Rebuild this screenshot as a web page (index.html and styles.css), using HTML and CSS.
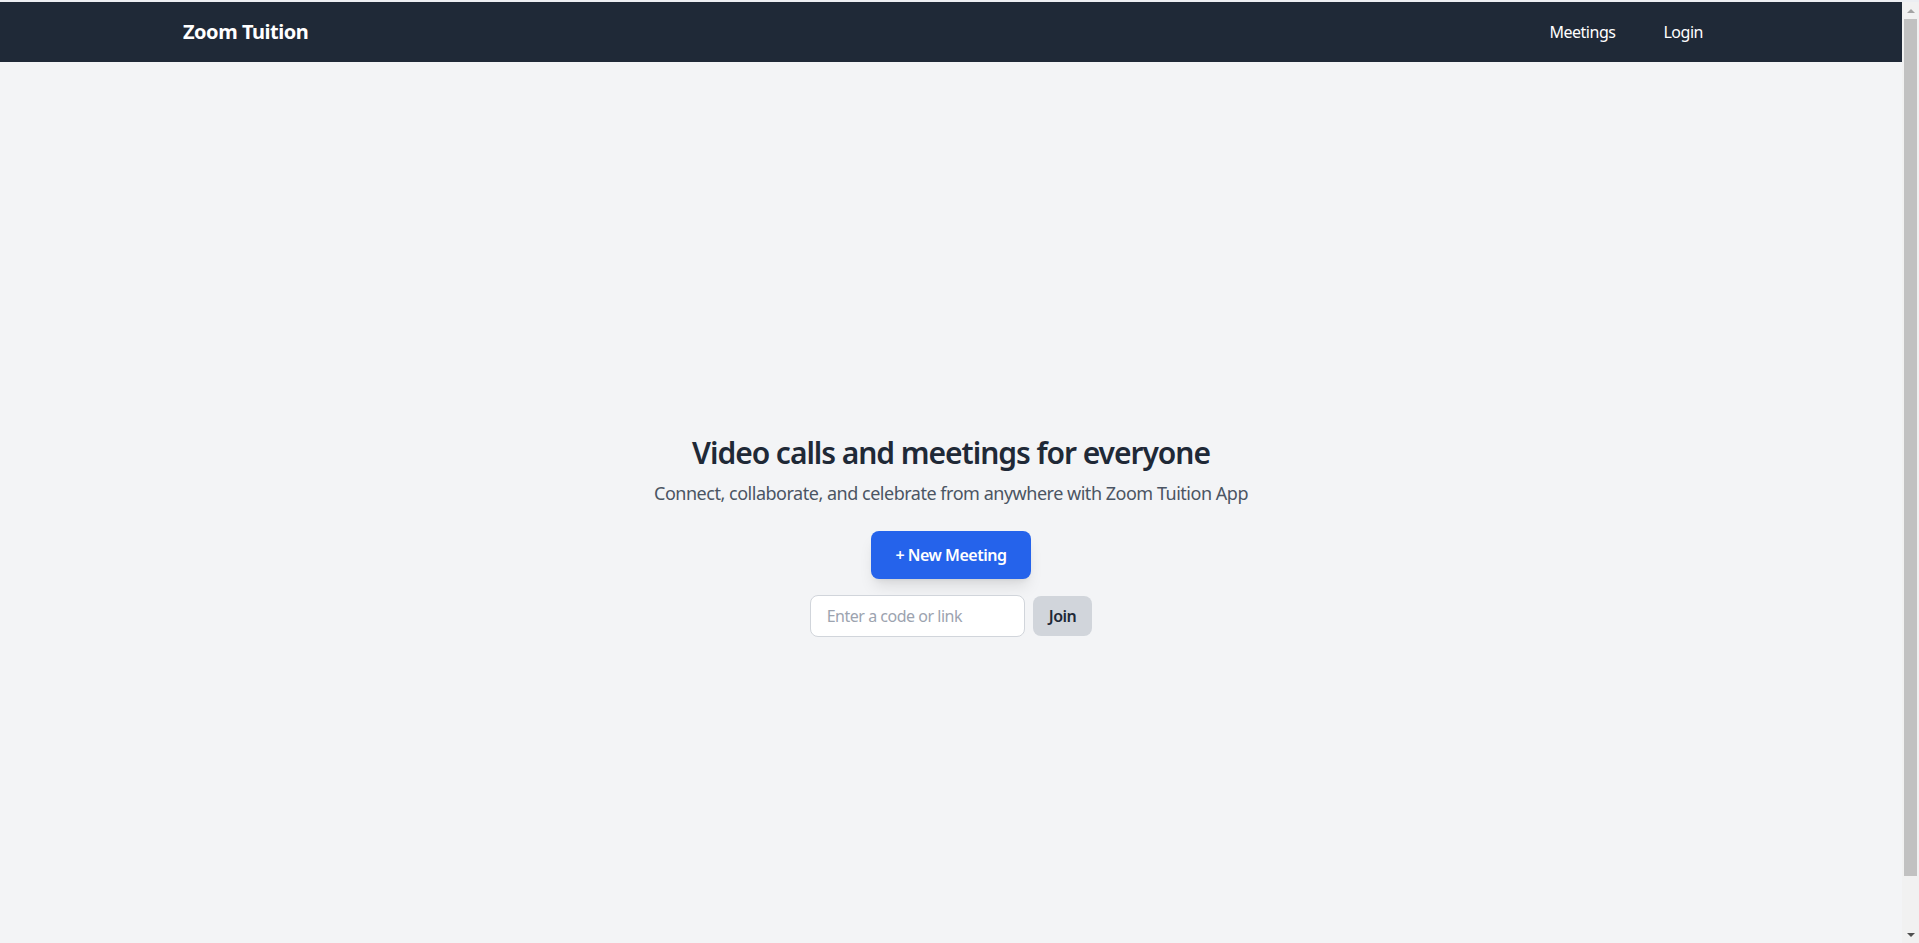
FILE: index.html
```html
<!DOCTYPE html>
<html lang="en">
<head>
<meta charset="utf-8">
<title>Zoom Tuition</title>
<link rel="stylesheet" href="styles.css">
</head>
<body>
  <nav class="navbar">
    <div class="container nav-inner">
      <a class="brand" href="#">Zoom Tuition</a>
      <div class="nav-links">
        <a class="nav-link" href="#">Meetings</a>
        <a class="nav-link" href="#">Login</a>
      </div>
    </div>
  </nav>
  <main class="hero">
    <div class="hero-content">
      <h2 class="hero-title">Video calls and meetings for everyone</h2>
      <p class="hero-subtitle">Connect, collaborate, and celebrate from anywhere with Zoom Tuition App</p>
      <button class="btn-primary" type="button">+ New Meeting</button>
      <div class="join-row">
        <input class="join-input" type="text" placeholder="Enter a code or link">
        <button class="btn-join" type="button">Join</button>
      </div>
    </div>
  </main>
  <div class="scrollbar" aria-hidden="true">
    <span class="scroll-arrow scroll-arrow-up"></span>
    <span class="scroll-track"><span class="scroll-thumb"></span></span>
    <span class="scroll-arrow scroll-arrow-down"></span>
  </div>
</body>
</html>
```
FILE: styles.css
```css
* {
  box-sizing: border-box;
}

html, body {
  margin: 0;
  padding: 0;
}

body {
  font-family: "Noto Sans", "Open Sans", sans-serif;
  letter-spacing: -0.03em;
  background: #f3f4f6;
  color: #1f2937;
  border-top: 2px solid #eceef2;
  padding-right: 17px;
}

.container {
  max-width: 1536px;
  margin: 0 auto;
}

.navbar {
  background: #1f2937;
  height: 60px;
  display: flex;
  align-items: center;
}

.nav-inner {
  width: 100%;
  display: flex;
  align-items: center;
  justify-content: space-between;
}

.brand {
  color: #ffffff;
  font-size: 20px;
  font-weight: 700;
  text-decoration: none;
  line-height: 28px;
}

.nav-links {
  display: flex;
  gap: 16px;
}

.nav-link {
  color: #ffffff;
  text-decoration: none;
  font-size: 16px;
  line-height: 24px;
  padding: 8px 16px;
}

.hero {
  min-height: 100vh;
  display: flex;
  align-items: center;
  justify-content: center;
  padding-top: 5px;
}

.hero-content {
  display: flex;
  flex-direction: column;
  align-items: center;
  text-align: center;
}

.hero-title {
  margin: 0 0 8px;
  font-size: 30px;
  line-height: 36px;
  font-weight: 600;
  letter-spacing: -0.035em;
  color: #1f2937;
}

.hero-subtitle {
  margin: 0 0 24px;
  font-size: 18px;
  line-height: 28px;
  color: #4b5563;
}

.btn-primary {
  font-family: inherit;
  letter-spacing: inherit;
  background: #2563eb;
  color: #ffffff;
  border: none;
  border-radius: 8px;
  padding: 12px 24px;
  font-size: 16px;
  line-height: 24px;
  font-weight: 600;
  box-shadow: 0 10px 15px -3px rgba(0, 0, 0, 0.1), 0 4px 6px -4px rgba(0, 0, 0, 0.1);
  cursor: pointer;
}

.join-row {
  margin-top: 16px;
  display: flex;
  align-items: center;
  gap: 8px;
}

.join-input {
  font-family: inherit;
  letter-spacing: inherit;
  width: 215px;
  height: 42px;
  padding: 8px 16px;
  font-size: 16px;
  line-height: 24px;
  border: 1px solid #d1d5db;
  border-radius: 8px;
  background: #ffffff;
  color: #1f2937;
  outline: none;
}

.join-input::placeholder {
  color: #9ca3af;
}

.btn-join {
  font-family: inherit;
  letter-spacing: inherit;
  background: #d1d5db;
  color: #1f2937;
  border: none;
  border-radius: 8px;
  padding: 8px 16px;
  font-size: 16px;
  line-height: 24px;
  font-weight: 600;
  cursor: pointer;
}

/* decorative replica of the browser's vertical scrollbar */
.scrollbar {
  position: fixed;
  top: 2px;
  right: 0;
  bottom: 0;
  width: 17px;
  background: #f1f1f1;
  display: flex;
  flex-direction: column;
}

.scroll-arrow {
  height: 17px;
  display: flex;
  align-items: center;
  justify-content: center;
}

.scroll-arrow::before {
  content: "";
  width: 0;
  height: 0;
  border-left: 4px solid transparent;
  border-right: 4px solid transparent;
}

.scroll-arrow-up::before {
  border-bottom: 4px solid #a3a3a3;
}

.scroll-arrow-down::before {
  border-top: 4px solid #505050;
}

.scroll-track {
  flex: 1;
  padding: 0 2px;
}

.scroll-thumb {
  display: block;
  height: 857px;
  background: #c1c1c1;
}
```
